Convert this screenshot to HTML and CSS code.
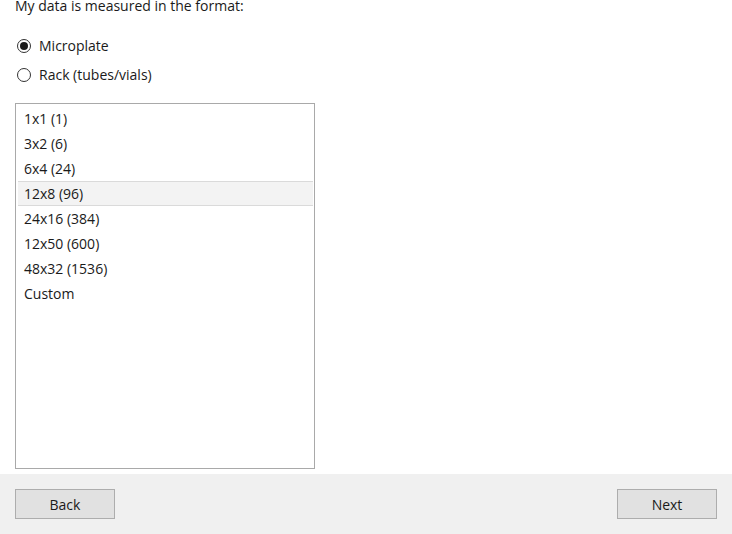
FILE: index.html
```html
<!DOCTYPE html>
<html>
<head>
<meta charset="utf-8">
<link rel="stylesheet" href="styles.css">
</head>
<body>
<div class="page">
  <div class="content">
    <div class="title">My data is measured in the format:</div>
    <div class="radios">
      <label class="radio-row"><span class="radio checked"></span><span>Microplate</span></label>
      <label class="radio-row"><span class="radio"></span><span>Rack (tubes/vials)</span></label>
    </div>
    <div class="listbox">
      <div class="item">1x1 (1)</div>
      <div class="item">3x2 (6)</div>
      <div class="item">6x4 (24)</div>
      <div class="item selected">12x8 (96)</div>
      <div class="item">24x16 (384)</div>
      <div class="item">12x50 (600)</div>
      <div class="item">48x32 (1536)</div>
      <div class="item">Custom</div>
    </div>
  </div>
  <div class="footer">
    <button class="btn">Back</button>
    <button class="btn">Next</button>
  </div>
</div>
</body>
</html>
```
FILE: styles.css
```css
html, body {
  margin: 0;
  padding: 0;
  background: #ffffff;
}
body {
  font-family: "Open Sans", "Noto Sans", sans-serif;
  font-size: 14px;
  color: #1a1a1a;
}
.page {
  width: 732px;
  height: 534px;
  display: flex;
  flex-direction: column;
  overflow: hidden;
}
.content {
  height: 474px;
  padding: 0 15px;
  box-sizing: border-box;
  display: flex;
  flex-direction: column;
}
.title {
  height: 14px;
  line-height: 14px;
  margin-top: -1px;
}
.radios {
  margin-top: 18px;
  display: flex;
  flex-direction: column;
}
.radio-row {
  height: 29px;
  display: flex;
  align-items: center;
  gap: 8px;
  padding-left: 2px;
}
.radio {
  width: 14px;
  height: 14px;
  border: 1px solid #333333;
  border-radius: 50%;
  box-sizing: border-box;
  display: flex;
  align-items: center;
  justify-content: center;
  background: #fff;
}
.radio.checked::after {
  content: "";
  width: 8px;
  height: 8px;
  border-radius: 50%;
  background: #1a1a1a;
}
.listbox {
  margin-top: 14px;
  width: 300px;
  height: 366px;
  border: 1px solid #a9a9a9;
  box-sizing: border-box;
  padding: 2px 1px 2px 2px;
  display: flex;
  flex-direction: column;
}
.item {
  height: 25px;
  line-height: 25px;
  padding-left: 6px;
  box-sizing: border-box;
}
.item.selected {
  background: #f3f3f3;
  border-top: 1px solid #dadada;
  border-bottom: 1px solid #dadada;
  line-height: 23px;
}
.footer {
  height: 60px;
  background: #f0f0f0;
  display: flex;
  justify-content: space-between;
  align-items: flex-start;
  padding: 15px 15px 0;
  box-sizing: border-box;
}
.btn {
  width: 100px;
  height: 30px;
  background: #e1e1e1;
  border: 1px solid #adadad;
  font-family: "Open Sans", "Noto Sans", sans-serif;
  font-size: 14px;
  color: #1a1a1a;
  padding: 0;
}
```
